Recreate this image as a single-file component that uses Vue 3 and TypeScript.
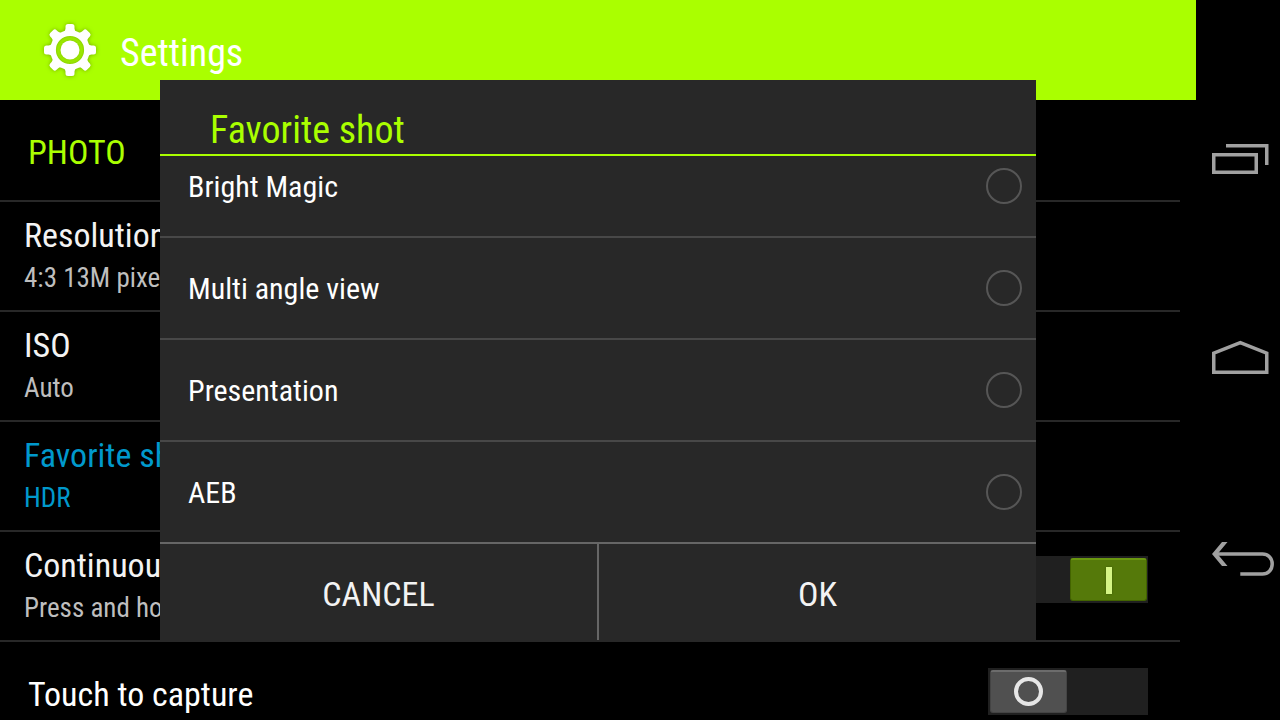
<script setup lang="ts">
import { ref } from 'vue'

interface Setting {
  title: string
  value: string
  active?: boolean
}

const settings: Setting[] = [
  { title: 'Resolution', value: '4:3 13M pixels' },
  { title: 'ISO', value: 'Auto' },
  { title: 'Favorite shot', value: 'HDR', active: true },
]

const options = ['Bright Magic', 'Multi angle view', 'Presentation', 'AEB']
const selected = ref('')
const continuous = ref(true)
const touch = ref(false)
const teeth = [0, 45, 90, 135, 180, 225, 270, 315]
</script>

<template>
  <div class="screen">
    <div class="app">
      <header class="bar">
        <svg class="gear" viewBox="-30 -30 60 60" aria-hidden="true">
          <g fill="#fff">
            <path
              v-for="a in teeth"
              :key="a"
              :transform="`rotate(${a})`"
              d="M-6.500 -18 Q-4.500 -19.500 -4.500 -21.500 V-23.500 Q-4.500 -26 -2 -26 H2 Q4.500 -26 4.500 -23.500 V-21.500 Q4.500 -19.500 6.500 -18 Z"
            />
          </g>
          <circle r="16.900" fill="none" stroke="#fff" stroke-width="5.600" />
          <circle r="9.500" fill="#fff" />
        </svg>
        <h1>Settings</h1>
      </header>

      <main class="list">
        <h2 class="section">PHOTO</h2>
        <button v-for="s in settings" :key="s.title" class="row" :class="{ active: s.active }">
          <span class="title">{{ s.title }}</span>
          <span class="sub">{{ s.value }}</span>
        </button>
        <label class="row with-switch">
          <span class="texts">
            <span class="title">Continuous shot</span>
            <span class="sub">Press and hold the shutter</span>
          </span>
          <span class="switch" :class="{ on: continuous }">
            <input v-model="continuous" type="checkbox" />
            <span class="thumb"><span class="mark"></span></span>
          </span>
        </label>
        <label class="row with-switch single">
          <span class="title">Touch to capture</span>
          <span class="switch" :class="{ on: touch }">
            <input v-model="touch" type="checkbox" />
            <span class="thumb"><span class="mark"></span></span>
          </span>
        </label>
      </main>

      <div class="overlay">
        <section class="dialog" role="dialog" aria-labelledby="dialog-title">
          <h2 id="dialog-title" class="dialog-title">Favorite shot</h2>
          <div class="options">
            <label v-for="o in options" :key="o" class="option">
              <span>{{ o }}</span>
              <input v-model="selected" type="radio" name="shot" :value="o" />
            </label>
          </div>
          <div class="actions">
            <button>CANCEL</button>
            <button>OK</button>
          </div>
        </section>
      </div>
    </div>

    <nav class="nav">
      <button aria-label="Recent apps">
        <svg viewBox="0 0 84 60"><path d="M17.750 24.750H60.250V42.250H17.750Z M30 15.750H70.750V35" /></svg>
      </button>
      <button aria-label="Home">
        <svg viewBox="0 0 84 60"><path d="M17.750 42.250V23.200L44.300 12.600L70.750 23.200V42.250Z" /></svg>
      </button>
      <button aria-label="Back">
        <svg viewBox="0 0 84 60">
          <path d="M20 24H66.500C72 24 76.200 28 76.200 34S72 44 66.500 44H44.300" />
          <path class="head" d="M16 24L26 12H31.500L21.500 24L31.500 36H26Z" />
        </svg>
      </button>
    </nav>
  </div>
</template>

<style>
body {
  margin: 0;
  background: #000;
}
</style>

<style scoped>
.screen {
  display: flex;
  height: 100vh;
  overflow: hidden;
  background: #000;
  color: #f3f3f3;
  font-family: "Roboto Condensed", Roboto, "Liberation Sans", sans-serif;
}
button {
  margin: 0;
  padding: 0;
  border: 0;
  background: none;
  color: inherit;
  font: inherit;
}
h1,
h2 {
  margin: 0;
  font-weight: 400;
}
.app {
  position: relative;
  flex: 1;
  min-width: 0;
}
.bar {
  display: flex;
  align-items: center;
  gap: 20px;
  height: 100px;
  padding-left: 40px;
  background: #aaff00;
  color: #fff;
}
.gear {
  width: 60px;
  height: 60px;
  filter: drop-shadow(0 0 2px rgba(60, 90, 0, 0.5));
}
.bar h1 {
  padding-top: 6px;
  font-size: 38px;
  line-height: 48px;
}
.list {
  display: flex;
  flex-direction: column;
  margin-right: 16px;
}
.section {
  box-sizing: border-box;
  height: 102px;
  padding: 4px 28px 0;
  border-bottom: 2px solid #282828;
  color: #aaff00;
  font-size: 34px;
  line-height: 96px;
}
.row {
  display: flex;
  flex-direction: column;
  box-sizing: border-box;
  height: 110px;
  padding: 10px 24px 0;
  border-bottom: 2px solid #282828;
  text-align: left;
  white-space: nowrap;
}
.texts {
  display: flex;
  flex-direction: column;
}
.title {
  font-size: 34px;
  line-height: 46px;
}
.sub {
  color: #bebebe;
  font-size: 27px;
  line-height: 40px;
}
.active,
.active .sub {
  color: #0099cc;
}
.with-switch {
  flex-direction: row;
  align-items: flex-start;
  justify-content: space-between;
  padding-right: 32px;
}
.with-switch .switch {
  margin-top: 14px;
}
.single {
  align-items: center;
  height: 98px;
  padding: 0 32px 0 28px;
  border-bottom: 0;
  color: #fff;
}
.single .title {
  padding-top: 6px;
}
.single .switch {
  margin-top: 0;
}
.switch {
  position: relative;
  display: flex;
  box-sizing: border-box;
  width: 160px;
  height: 47px;
  padding: 2px 1px 2px 2px;
  background: #202020;
}
.switch input {
  position: absolute;
  inset: 0;
  width: 100%;
  height: 100%;
  margin: 0;
  opacity: 0;
}
.on {
  justify-content: flex-end;
}
.thumb {
  display: flex;
  align-items: center;
  justify-content: center;
  box-sizing: border-box;
  width: 77px;
  border: 1px solid #444;
  border-top: 2px solid #6c6c6c;
  border-radius: 3px;
  background: #505050;
}
.mark {
  box-sizing: border-box;
  width: 29px;
  height: 29px;
  border: 4px solid #e6e6e6;
  border-radius: 50%;
}
.on .thumb {
  border-color: #6a9710 #436400 #436400;
  background: #55790a;
}
.on .mark {
  width: 6px;
  height: 27px;
  border: 0;
  border-radius: 0;
  background: #d5f585;
  box-shadow: 0 0 2px #38520a;
}
.overlay {
  position: absolute;
  inset: 0;
  display: flex;
  padding: 80px 160px;
}
.dialog {
  display: flex;
  flex: 1;
  flex-direction: column;
  min-width: 0;
  background: #282828;
}
.dialog-title {
  padding: 26px 50px 0;
  border-bottom: 2px solid #aaff00;
  color: #aaff00;
  font-size: 38px;
  line-height: 48px;
}
.options {
  display: flex;
  flex: 1;
  flex-direction: column;
  justify-content: flex-end;
  min-height: 0;
  overflow: hidden;
}
.option {
  display: flex;
  flex: none;
  align-items: center;
  justify-content: space-between;
  height: 100px;
  padding: 0 14px 0 28px;
  border-bottom: 2px solid #484848;
  color: #fff;
  font-size: 30px;
  line-height: 40px;
}
.option:last-child {
  border-bottom-color: #666;
}
.option span {
  padding-top: 2px;
}
.option input {
  appearance: none;
  box-sizing: border-box;
  width: 36px;
  height: 36px;
  margin: 0;
  border: 2px solid #565656;
  border-radius: 50%;
}
.option input:checked {
  background: radial-gradient(#aaff00 0 8px, transparent 9px);
}
.actions {
  display: flex;
  height: 96px;
}
.actions button {
  flex: 1;
  padding-top: 4px;
  font-size: 34px;
  line-height: 44px;
}
.actions button + button {
  border-left: 2px solid #666;
}
.nav {
  display: flex;
  flex-direction: column;
  justify-content: space-between;
  width: 84px;
  padding: 130px 0;
  box-sizing: border-box;
}
.nav button,
.nav svg {
  display: block;
  width: 84px;
  height: 60px;
}
.nav path {
  fill: none;
  stroke: #a0a0a0;
  stroke-width: 3.5;
}
.nav .head {
  fill: #a0a0a0;
  stroke: none;
}
</style>
